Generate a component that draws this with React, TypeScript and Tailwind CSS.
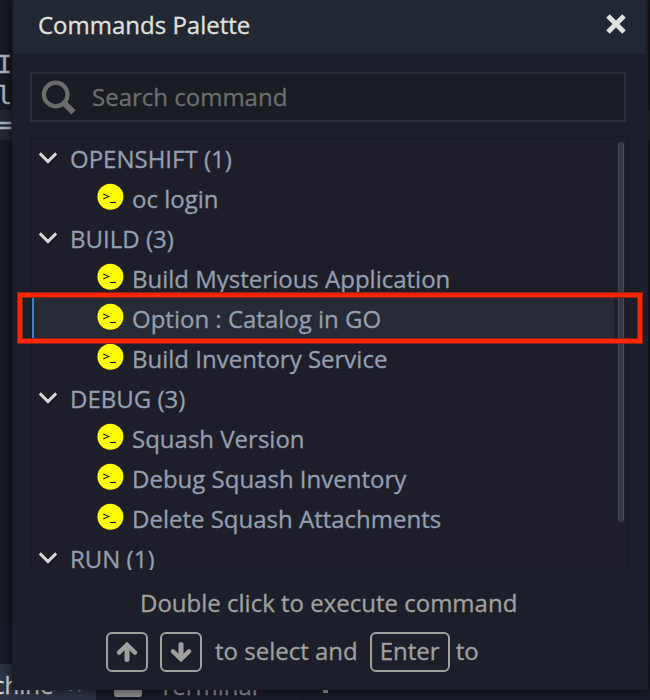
import React from "react";

type Row = { kind: "group" | "item"; label: string; selected?: boolean };

const rows: Row[] = [
  { kind: "group", label: "OPENSHIFT (1)" },
  { kind: "item", label: "oc login" },
  { kind: "group", label: "BUILD (3)" },
  { kind: "item", label: "Build Mysterious Application" },
  { kind: "item", label: "Option : Catalog in GO", selected: true },
  { kind: "item", label: "Build Inventory Service" },
  { kind: "group", label: "DEBUG (3)" },
  { kind: "item", label: "Squash Version" },
  { kind: "item", label: "Debug Squash Inventory" },
  { kind: "item", label: "Delete Squash Attachments" },
  { kind: "group", label: "RUN (1)" },
];

function Chevron() {
  return (
    <svg className="h-[20px] w-[24px] shrink-0" viewBox="0 0 24 20" fill="none">
      <path d="M4.6 6.6 13 15 21.4 6.6" stroke="#11131b" strokeWidth="3" />
      <path d="M3.8 5.4 12 13.6 20.2 5.4" stroke="#d9d9d7" strokeWidth="3" />
    </svg>
  );
}

function CommandIcon() {
  return (
    <svg className="h-[28px] w-[28px] shrink-0" viewBox="0 0 28 28" fill="none">
      <circle cx="14.4" cy="13.7" r="13" fill="#ffff00" />
      <path d="M7.2 11 12.8 13.5 7.2 16" stroke="#22230a" strokeWidth="1.1" />
      <path d="M14 19.5H20" stroke="#111" strokeWidth="1.1" />
    </svg>
  );
}

function ListRow({ row }: { row: Row }) {
  if (row.kind === "group") {
    return (
      <div className="flex h-10 shrink-0 items-start pl-1">
        <div className="pt-[10px]"><Chevron /></div>
        <span className="pt-px pl-[10px] leading-10 whitespace-nowrap">{row.label}</span>
      </div>
    );
  }
  return (
    <div className={"mr-[14px] flex h-10 shrink-0 items-start border-l-2 pl-[62px] " + (row.selected ? "border-[#3684cb] bg-[#262a35]" : "border-transparent")}>
      <div className="pt-[5px]"><CommandIcon /></div>
      <span className="pt-px pl-[8px] leading-10 whitespace-nowrap">{row.label}</span>
    </div>
  );
}

function ArrowKey({ down = false }: { down?: boolean }) {
  return (
    <div className="flex h-10 w-[42px] shrink-0 items-center justify-center rounded-[6px] border-2 border-[#a0a09f]">
      <svg className={"h-6 w-6 " + (down ? "rotate-180" : "")} viewBox="0 0 24 24" fill="none" stroke="#a0a09f" strokeWidth="5">
        <path d="M12 19.5V6" strokeLinecap="round" />
        <path d="M4 12.6 12 4.8 20 12.6" strokeLinecap="round" strokeWidth="4.4" />
      </svg>
    </div>
  );
}

function Editor() {
  return (
    <div className="flex h-full flex-col bg-[#171a22]">
      <div className="flex h-[625px] shrink-0 flex-col pt-[50px] font-['DejaVu_Sans_Mono','Liberation_Mono',monospace] text-[25px] text-[#a9b7c8]">
        <div className="-ml-[3px] h-[30px] leading-[30px]">I</div>
        <div className="-ml-[3px] h-[30px] leading-[31px]">l</div>
        <div className="h-[30px] bg-[#252930] leading-[30px]"><span className="-ml-[3px]">=</span></div>
      </div>
      <div className="h-[39px] shrink-0 bg-[#1a1d2a]" />
      <div className="flex flex-1 overflow-hidden bg-[#191b27] text-[24px] text-[#8b8c90]">
        <div className="flex w-24 shrink-0 bg-[#2d3443] text-[#dededc]">
          <span className="-ml-[7px] leading-[42px]">chine</span>
          <span className="pl-[14px] text-[26px] leading-[42px] text-[#8a8d92]">×</span>
        </div>
        <div className="ml-[18px] h-[33px] w-7 shrink-0 rounded-[3px] bg-[#929292]" />
        <span className="w-[161px] shrink-0 border-r border-[#14161f] pl-[17px] leading-[43px]">Terminal</span>
        <div className="ml-5 h-[29px] w-[5px] bg-[#929292]" />
      </div>
    </div>
  );
}

export default function App() {
  return (
    <div className="relative h-[700px] w-[650px] overflow-hidden font-['Open_Sans','Noto_Sans',sans-serif] [-webkit-text-stroke:0.3px]">
      <Editor />
      <section className="absolute top-0 left-3 flex h-[690px] w-[636px] flex-col border-x-2 border-b-2 border-[#1a1e28] bg-[#1c1f2a] text-[24px] shadow-[0_0_10px_2px_rgba(0,0,0,0.5)]">
        <header className="flex h-[54px] shrink-0 items-start justify-between bg-[#212733] pr-[19px] pl-6 text-[#e0e0de]">
          <h1 className="leading-[50px]">Commands Palette</h1>
          <svg className="mt-[13px] h-[22px] w-[22px]" viewBox="0 0 22 22" fill="none">
            <path d="m3 3 16 16M19 3 3 19" stroke="#e0e0de" strokeWidth="5" />
          </svg>
        </header>
        <div className="mt-[18px] ml-4 flex h-[50px] w-[596px] shrink-0 items-center border-2 border-[#2b303c] bg-[#191c23] text-[#6d6d6d]">
          <svg className="ml-[9px] h-9 w-9" viewBox="0 0 36 36" fill="none" stroke="#6b6b6b">
            <circle cx="14.7" cy="15.5" r="11.8" strokeWidth="4.2" />
            <path d="m23 23.8 9.5 9.5" strokeWidth="6" />
          </svg>
          <span className="pl-[15px]">Search command</span>
        </div>
        <div className="mt-[14px] ml-4 flex h-[436px] w-[600px] shrink-0 border-2 border-[#191c25] bg-[#1d1e2a] text-[#949eae]">
          <div className="flex flex-1 flex-col overflow-hidden">
            {rows.map((row) => <ListRow key={row.label} row={row} />)}
          </div>
          <div className="mt-1 mr-1 -ml-[10px] h-[380px] w-[6px] rounded-[2px] border-x border-[#454954] bg-[#353843]" />
        </div>
        <footer className="flex flex-col text-[#a0a09f]">
          <p className="mt-[11px] pl-[126px] leading-10">Double click to execute command</p>
          <div className="mt-[9px] ml-[92px] flex h-10 items-center whitespace-nowrap">
            <ArrowKey />
            <div className="ml-3"><ArrowKey down /></div>
            <span className="ml-[13px] pb-[2px]">to select and</span>
            <kbd className="ml-3 flex h-10 w-20 items-center justify-center rounded-[6px] border-2 border-[#a0a09f] pb-[2px] font-['Open_Sans','Noto_Sans',sans-serif] text-[24px]">Enter</kbd>
            <span className="ml-[6px] pb-[2px]">to</span>
          </div>
        </footer>
      </section>
      <div className="pointer-events-none absolute top-[292px] left-[17px] h-[52px] w-[626px] border border-[#8d1f14]">
        <div className="h-full border-4 border-[#ff2600] outline-1 -outline-offset-5 outline-[#8d1f14]" />
      </div>
    </div>
  );
}
